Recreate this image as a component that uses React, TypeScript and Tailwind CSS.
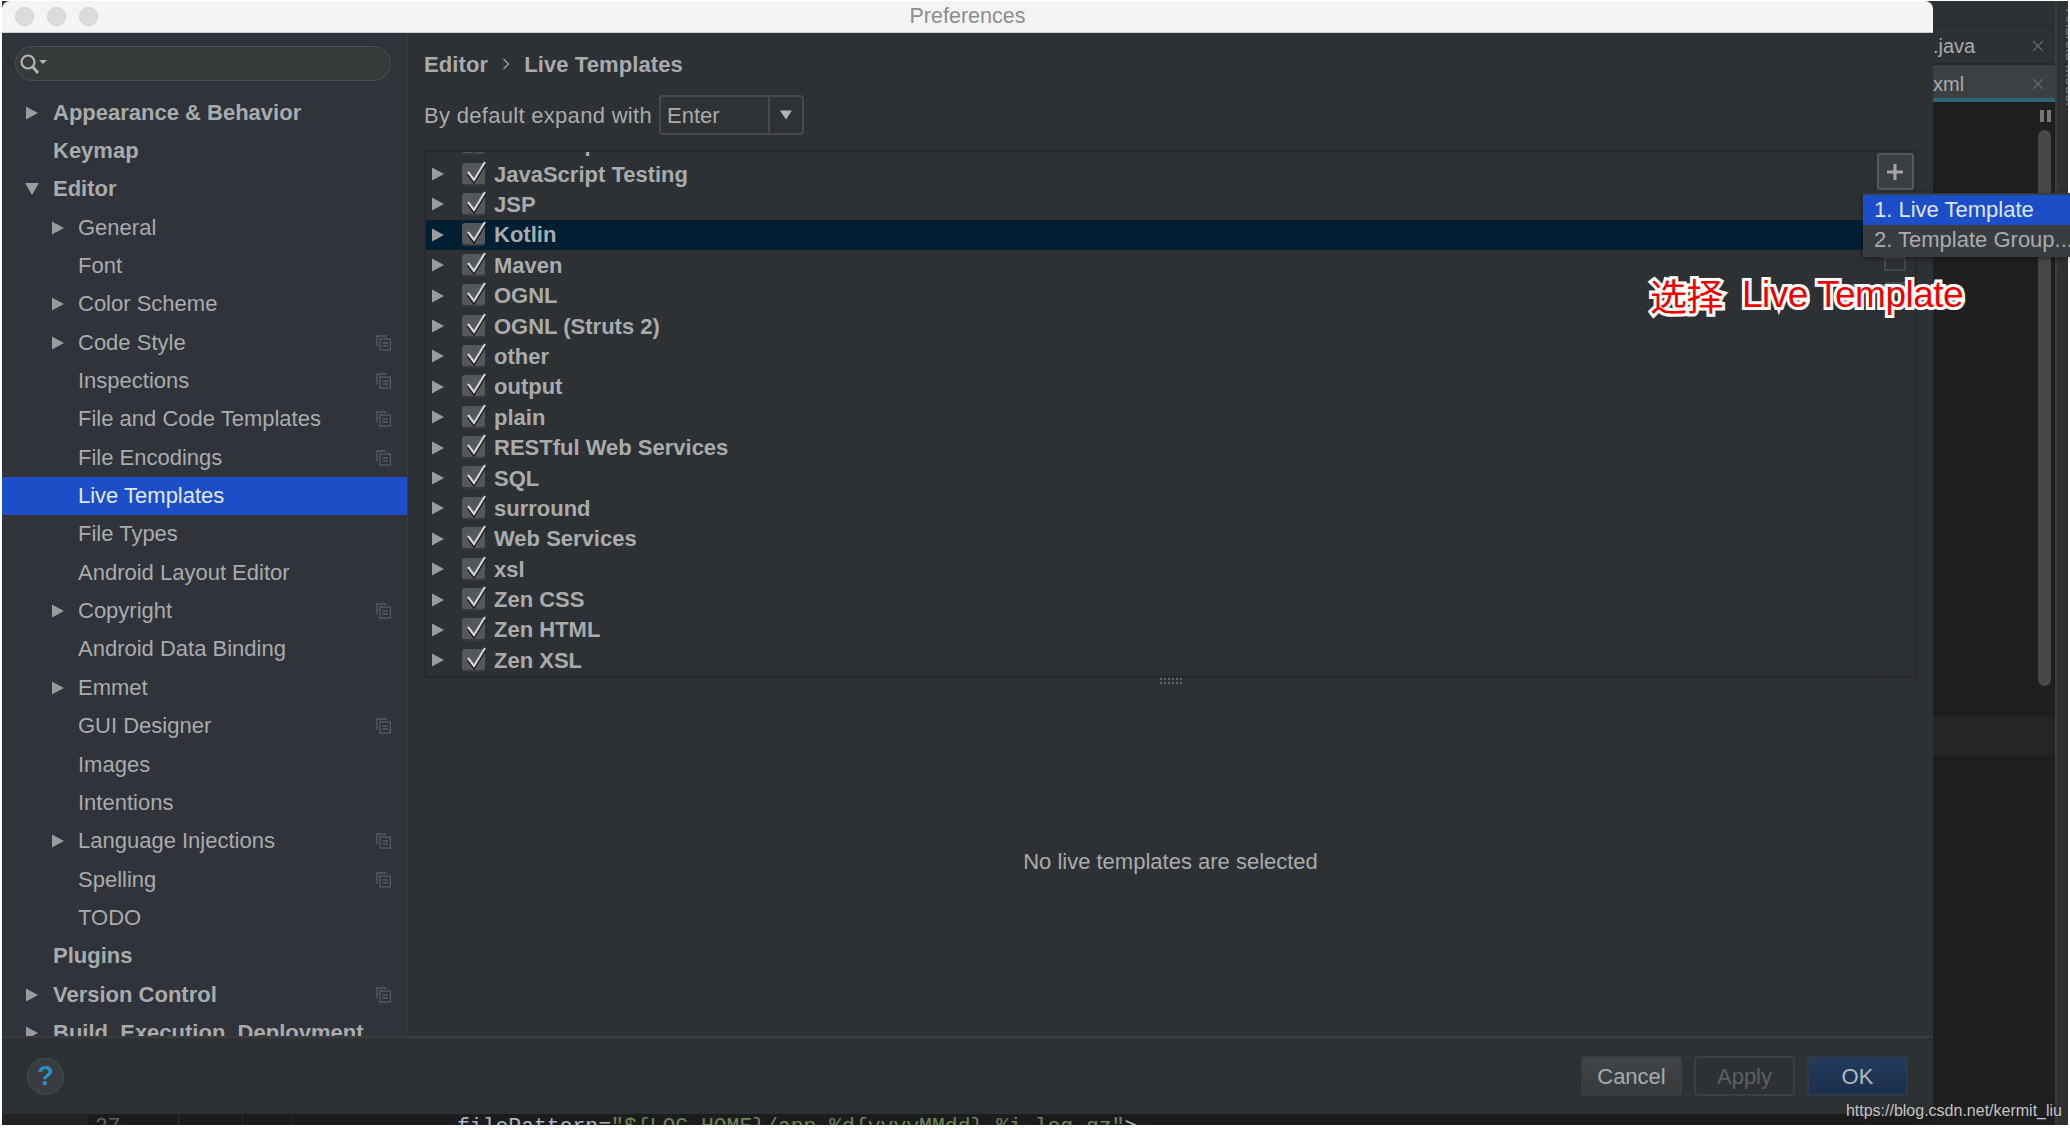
const FONT = "font-['Liberation_Sans',Arial,sans-serif]";

type NavItem = { label: string; level: 0 | 1; arrow?: 'right' | 'down'; copy?: boolean; active?: boolean };

const navItems: NavItem[] = [
  { label: 'Appearance & Behavior', level: 0, arrow: 'right' },
  { label: 'Keymap', level: 0 },
  { label: 'Editor', level: 0, arrow: 'down' },
  { label: 'General', level: 1, arrow: 'right' },
  { label: 'Font', level: 1 },
  { label: 'Color Scheme', level: 1, arrow: 'right' },
  { label: 'Code Style', level: 1, arrow: 'right', copy: true },
  { label: 'Inspections', level: 1, copy: true },
  { label: 'File and Code Templates', level: 1, copy: true },
  { label: 'File Encodings', level: 1, copy: true },
  { label: 'Live Templates', level: 1, active: true },
  { label: 'File Types', level: 1 },
  { label: 'Android Layout Editor', level: 1 },
  { label: 'Copyright', level: 1, arrow: 'right', copy: true },
  { label: 'Android Data Binding', level: 1 },
  { label: 'Emmet', level: 1, arrow: 'right' },
  { label: 'GUI Designer', level: 1, copy: true },
  { label: 'Images', level: 1 },
  { label: 'Intentions', level: 1 },
  { label: 'Language Injections', level: 1, arrow: 'right', copy: true },
  { label: 'Spelling', level: 1, copy: true },
  { label: 'TODO', level: 1 },
  { label: 'Plugins', level: 0 },
  { label: 'Version Control', level: 0, arrow: 'right', copy: true },
  { label: 'Build, Execution, Deployment', level: 0, arrow: 'right' },
];

const groups = [
  'JavaScript Testing', 'JSP', 'Kotlin', 'Maven', 'OGNL', 'OGNL (Struts 2)', 'other', 'output', 'plain',
  'RESTful Web Services', 'SQL', 'surround', 'Web Services', 'xsl', 'Zen CSS', 'Zen HTML', 'Zen XSL',
];

function Arrow({ dir, className }: { dir: 'right' | 'down'; className?: string }) {
  return (
    <svg width="14" height="14" viewBox="0 0 14 14" className={className}>
      {dir === 'right' ? <path d="M1 0.5 L13 7 L1 13.5 Z" fill="#9a9b9c" /> : <path d="M0 1 H14 L7 13 Z" fill="#9a9b9c" />}
    </svg>
  );
}

function CopyIcon() {
  return (
    <svg width="15" height="16" viewBox="0 0 15 16" fill="none" stroke="#5a5e63" strokeWidth="1.3">
      <path d="M1 11.5 V1 H10.5" />
      <rect x="4" y="4" width="10.4" height="11" fill="#303339" />
      <path d="M6.5 8 H12 M6.5 11 H12" />
    </svg>
  );
}

function Check() {
  return (
    <div className="relative h-[23px] w-[23px] shrink-0 rounded-[3px] border-b-2 border-[#37393b] bg-[#55585a]">
      <svg width="25" height="30" viewBox="0 0 25 30" fill="none" className="absolute -top-[6px] left-0">
        <path d="M6 17 L12 25 L23 7" stroke="#151617" strokeWidth="2.6" />
        <path d="M6 15 L12 23 L23 5" stroke="#d2d3d4" strokeWidth="2.2" />
      </svg>
    </div>
  );
}

function TreeRow({ label, selected }: { label: string; selected?: boolean }) {
  return (
    <div className={`flex h-[30.4px] shrink-0 items-center pl-[5px] ${selected ? 'bg-[#001f33]' : ''}`}>
      <Arrow dir="right" />
      <div className="ml-[17px]"><Check /></div>
      <span className="ml-[9px] text-[22px] font-bold text-[#a9abad]">{label}</span>
    </div>
  );
}

function Sidebar() {
  return (
    <aside className="flex h-full w-[406px] shrink-0 flex-col overflow-hidden border-r border-[#3a3c3f] bg-[#303339]">
      <div className="px-[13px] pt-[13px]">
        <div className="flex h-[35px] w-[376px] items-center rounded-full border border-[#4d5052] bg-[#373a3b] pl-[3px]">
          <svg width="30" height="22" viewBox="0 0 30 22" fill="none">
            <circle cx="9" cy="9" r="6.5" stroke="#b4b5b6" strokeWidth="2.2" />
            <path d="M13.5 13.5 L19 20" stroke="#b4b5b6" strokeWidth="2.8" />
            <path d="M20 7 H28 L24 11 Z" fill="#b4b5b6" />
          </svg>
        </div>
      </div>
      <nav className="mt-[12.5px]">
        {navItems.map((item) => (
          <div
            key={item.label}
            className={`flex h-[38.35px] items-center pr-[16px] ${item.active ? 'bg-[#1c4fc7] text-[#e3e8f4]' : 'text-[#a9abad]'} ${item.level === 0 ? 'pl-[23px]' : 'pl-[49px]'}`}
          >
            <span className="w-[14px]">{item.arrow ? <Arrow dir={item.arrow} /> : null}</span>
            <span className={`grow text-[22px] leading-none ${item.level === 0 ? 'pl-[14px] font-bold' : 'pl-[13px]'}`}>{item.label}</span>
            {item.copy ? <CopyIcon /> : null}
          </div>
        ))}
      </nav>
    </aside>
  );
}

function Content() {
  return (
    <main className="flex min-w-0 grow flex-col bg-[#2e3134] pl-[16px] pr-[16px]">
      <div className="flex h-[62px] items-center text-[22px] font-bold tracking-[0.1px] text-[#a9abad]">
        <span>Editor</span>
        <svg width="8" height="12" viewBox="0 0 8 12" fill="none" className="mx-[14px]"><path d="M1.5 1 L6.5 6 L1.5 11" stroke="#a9abad" strokeWidth="1.2" /></svg>
        <span>Live Templates</span>
      </div>
      <div className="flex h-[40px] items-center text-[22px] text-[#a9abad]">
        <span className="tracking-[0.3px]">By default expand with</span>
        <div className="ml-[7px] flex h-[40px] w-[145px] items-center rounded-[4px] border-2 border-[#47494b] bg-[#2f3235]">
          <span className="w-[107px] pl-[6px]">Enter</span>
          <span className="flex h-full grow items-center justify-center border-l-2 border-[#47494b]">
            <svg width="14" height="10" viewBox="0 0 14 10"><path d="M1 0.5 H13 L7 9.5 Z" fill="#b4b5b6" /></svg>
          </span>
        </div>
      </div>
      <div className="mt-[15px] flex h-[527.5px] border-2 border-[#27292b]">
        <div className="min-w-0 grow overflow-hidden">
          <div className="-mt-[23.5px]">
            <div className="flex h-[30.4px] items-center pl-[5px]">
              <span className="w-[14px]" />
              <div className="ml-[17px]"><Check /></div>
              <span className="ml-[9px] text-[22px] font-bold text-[#a9abad]">JavaScript</span>
            </div>
            {groups.map((g) => (
              <TreeRow key={g} label={g} selected={g === 'Kotlin'} />
            ))}
          </div>
        </div>
        <div className="flex w-[41px] shrink-0 flex-col items-center border-l border-[#27292b] pt-[1px]">
          <div className="flex h-[37px] w-[37px] items-center justify-center rounded-[3px] border-2 border-[#55585a] bg-[#3c3f42]">
            <svg width="20" height="20" viewBox="0 0 20 20"><path d="M10 2 V18 M2 10 H18" stroke="#a4a6a8" strokeWidth="3" /></svg>
          </div>
          <div className="mt-[67px] h-[14px] w-[22px] border-2 border-[#45484a]" />
          <div className="mt-[11px] h-[14px] w-[20px] bg-[#45484a]" />
        </div>
      </div>
      <div className="flex h-[7px] items-center justify-center">
        <svg width="22" height="6" viewBox="0 0 22 6"><path d="M1 0 V2 M5 0 V2 M9 0 V2 M13 0 V2 M17 0 V2 M21 0 V2 M1 4 V6 M5 4 V6 M9 4 V6 M13 4 V6 M17 4 V6 M21 4 V6" stroke="#75787a" strokeWidth="1.5" /></svg>
      </div>
      <div className="flex grow items-center justify-center pt-[3px] text-[22px] text-[#a9abad]">No live templates are selected</div>
    </main>
  );
}

function Footer() {
  const base = 'flex h-[40px] w-[101px] items-center justify-center rounded-[4px] border-2 text-[22px]';
  return (
    <footer className="flex h-[78px] shrink-0 items-center justify-between border-t-2 border-[#3a3c3e] bg-[#2e3134] pl-[25px] pr-[25px]">
      <div className="flex h-[37px] w-[37px] items-center justify-center rounded-full border border-[#4a4d50] bg-[#3a3d40] text-[27px] font-bold text-[#2c8fc9]">?</div>
      <div className="flex gap-[12px]">
        <div className={`${base} border-[#3c3f41] bg-gradient-to-b from-[#42464a] to-[#363a3d] text-[#a9abad]`}>Cancel</div>
        <div className={`${base} border-[#3c3f41] bg-[#2e3134] text-[#5d6063]`}>Apply</div>
        <div className={`${base} border-[#2c3a4c] bg-gradient-to-b from-[#233c5e] to-[#1b2f4b] text-[#b3b8bd]`}>OK</div>
      </div>
    </footer>
  );
}

function TabClose() {
  return (
    <svg width="12" height="12" viewBox="0 0 12 12" fill="none"><path d="M1 1 L11 11 M11 1 L1 11" stroke="#5f6265" strokeWidth="1.5" /></svg>
  );
}

function Backdrop() {
  return (
    <div className="absolute inset-x-[2px] bottom-[5px] top-[1px] flex bg-[#1f1f1f]">
      <div className="flex min-w-0 grow flex-col">
        <div className="h-[25px] border-b border-[#25272a] bg-[#2e3134]" />
        <div className="flex h-[39px] items-center justify-between border-b-2 border-[#25272a] bg-[#2e3134] pl-[1931px] pr-[11px] pt-[3px] text-[20px] text-[#a9abad]">
          <span>.java</span>
          <TabClose />
        </div>
        <div className="flex h-[37px] items-center justify-between border-b-[4px] border-[#2f6478] bg-[#3c4043] pl-[1931px] pr-[11px] pt-[5px] text-[20px] text-[#a9abad]">
          <span>xml</span>
          <TabClose />
        </div>
        <div className="flex grow flex-col">
          <div className="flex h-[28px] items-start justify-end pr-[4px] pt-[8px]">
            <div className="flex gap-[3px]"><span className="h-[12px] w-[4px] bg-[#777]" /><span className="h-[12px] w-[4px] bg-[#777]" /></div>
          </div>
          <div className="flex h-[556px] justify-end pr-[4px]"><div className="h-full w-[13px] rounded-full bg-[#484848]" /></div>
          <div className="mt-[31px] h-[38px] bg-[#252525]" />
        </div>
      </div>
      <div className="w-[13px] shrink-0 overflow-hidden border-l-2 border-[#3a3c3e] bg-[#2e3134]">
        <div className="flex flex-col pl-[7px] text-[15px] leading-[15px] text-[#70808e] [writing-mode:vertical-rl]">
          <span className="mt-[42px] h-[210px]">Maven Projects</span>
          <span className="h-[90px]">Gradle</span>
          <span className="-ml-[2px] h-[24px] w-[8px] bg-[#1d7f9e]" />
          <span className="mt-[3px] h-[113px]">Database</span>
          <span className="-ml-[1px] h-[14px] w-[7px] rounded-l-full bg-[#d98a1e]" />
          <span className="mt-[13px] h-[170px]">Bean Validation</span>
          <span className="-ml-[2px] h-[16px] w-[6px] bg-[#1f9ed1]" />
          <span className="mt-[8px]">Android Model</span>
        </div>
      </div>
    </div>
  );
}

function BottomCodeLine() {
  return (
    <div className="absolute bottom-[5px] left-[2px] flex h-[11px] w-[1931px] overflow-hidden bg-[#1c1c1c] font-['Liberation_Mono',monospace] text-[21.4px] leading-[26px]">
      <span className="w-[84px] bg-[#232323]" />
      <span className="w-[92px] border-l border-[#333] pl-[8px] text-[#5f6163]">27</span>
      <span className="w-[64px] border-l border-[#333]" />
      <span className="w-[50px] border-l border-[#2b2b2b]" />
      <span className="border-l border-[#2b2b2b] pl-[164px] text-[#a9b7c6] whitespace-pre">
        filePattern=<span className="text-[#6a8759]">"$&#123;LOG_HOME&#125;/app-%d&#123;yyyyMMdd&#125;-%i.log.gz"</span>&gt;
      </span>
    </div>
  );
}

export default function App() {
  return (
    <div className={`relative h-[1130px] w-[2070px] overflow-hidden bg-white ${FONT}`}>
      <Backdrop />
      <BottomCodeLine />
      <section className="absolute left-[2px] top-[1px] flex h-[1113px] w-[1931px] flex-col overflow-hidden rounded-t-[8px] bg-[#2e3134]">
        <header className="relative flex h-[32px] shrink-0 items-center justify-center border-b border-[#cfcfcf] bg-[#f4f4f4] text-[21.5px] text-[#8e8e8e]">
          <div className="absolute left-[13px] flex gap-[13px]">
            <span className="h-[19px] w-[19px] rounded-full border border-[#d0d0d0] bg-[#dcdcdc]" />
            <span className="h-[19px] w-[19px] rounded-full border border-[#d0d0d0] bg-[#dcdcdc]" />
            <span className="h-[19px] w-[19px] rounded-full border border-[#d0d0d0] bg-[#dcdcdc]" />
          </div>
          Preferences
        </header>
        <div className="flex min-h-0 grow">
          <Sidebar />
          <Content />
        </div>
        <Footer />
      </section>
      <div className="absolute left-[1863px] top-[193px] h-[64px] w-[207px] overflow-hidden bg-[#3a3d40] pt-[2px] text-[22px] whitespace-nowrap shadow-[0_2px_6px_rgba(0,0,0,0.4)]">
        <div className="flex h-[30px] items-center bg-[#1c4fc7] pb-[2px] pl-[11px] text-[#dfe5f2]">1. Live Template</div>
        <div className="flex h-[31px] items-center pb-[2px] pl-[11px] text-[#a9abad]">2. Template Group...</div>
      </div>
      <div className="absolute left-[1650px] top-[270px] flex items-center whitespace-nowrap text-[37px] leading-[50px] tracking-[-0.5px] text-[#f00000] [-webkit-text-stroke:6px_white] [paint-order:stroke_fill]">
        <span className="font-['Noto_Sans_CJK_SC',sans-serif]">选择</span>
        <span className="ml-[19px]">Live Template</span>
      </div>
      <div className="absolute right-[8px] top-[1101px] text-[16px] leading-[20px] text-[#c4c4c4] [text-shadow:0_0_2px_#222]">https://blog.csdn.net/kermit_liu</div>
    </div>
  );
}
